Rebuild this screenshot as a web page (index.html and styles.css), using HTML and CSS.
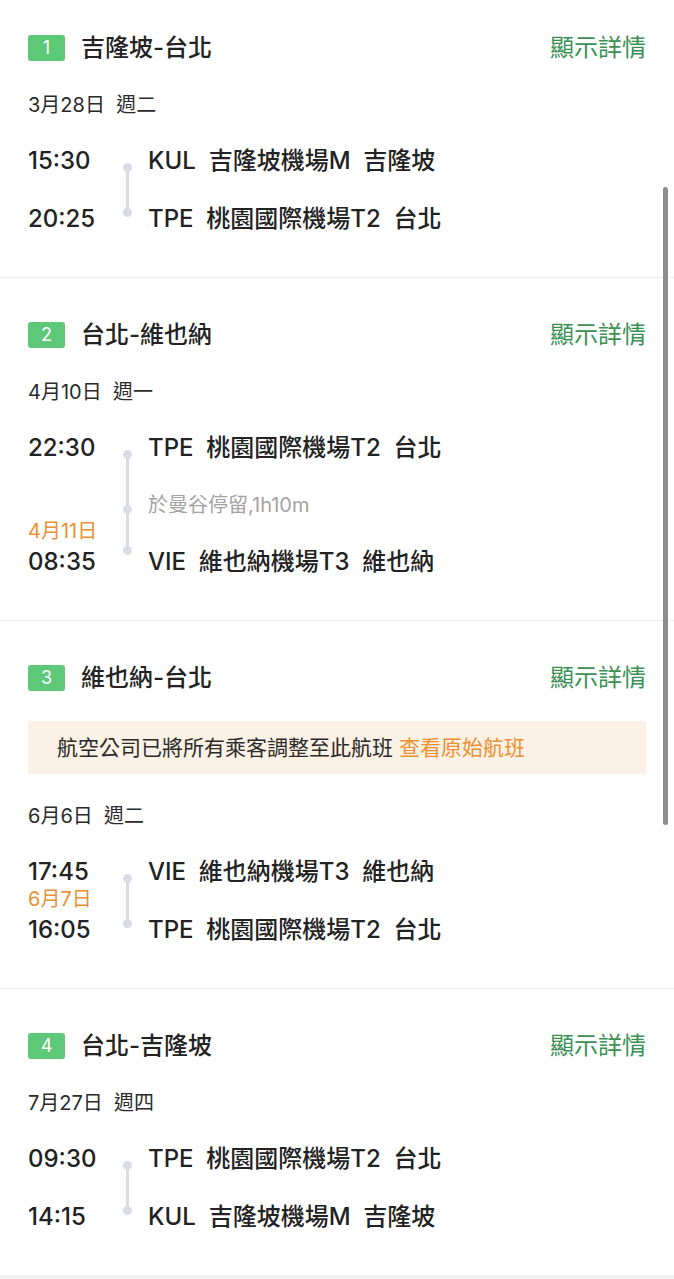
FILE: index.html
```html
<!DOCTYPE html>
<html lang="zh-Hant">
<head>
    <meta charset="UTF-8">
    <meta name="viewport" content="width=device-width, initial-scale=1.0">
    <title>行程航班</title>
    <link rel="stylesheet" href="styles.css">
</head>
<body>
<div class="trip">

    <!-- 第一段 -->
    <section class="leg">
        <div class="leg-head">
            <span class="badge">1</span>
            <h2 class="leg-title">吉隆坡-台北</h2>
            <a class="details">顯示詳情</a>
        </div>
        <div class="leg-date">3月28日&nbsp;&nbsp;週二</div>
        <div class="stops">
            <div class="track"><i class="dot"></i><i class="line"></i><i class="dot"></i></div>
            <div class="time">15:30</div>
            <div class="place">KUL&nbsp;&nbsp;吉隆坡機場M&nbsp;&nbsp;吉隆坡</div>
            <div class="time">20:25</div>
            <div class="place">TPE&nbsp;&nbsp;桃園國際機場T2&nbsp;&nbsp;台北</div>
        </div>
    </section>

    <!-- 第二段 (經停) -->
    <section class="leg">
        <div class="leg-head">
            <span class="badge">2</span>
            <h2 class="leg-title">台北-維也納</h2>
            <a class="details">顯示詳情</a>
        </div>
        <div class="leg-date">4月10日&nbsp;&nbsp;週一</div>
        <div class="stops with-stop">
            <div class="track track-3"><i class="dot"></i><i class="line"></i><i class="dot"></i><i class="line short"></i><i class="dot"></i></div>
            <div class="time">22:30</div>
            <div class="place">TPE&nbsp;&nbsp;桃園國際機場T2&nbsp;&nbsp;台北</div>
            <div class="stopover">於曼谷停留,1h10m</div>
            <div class="time"><span class="next-day">4月11日</span><span>08:35</span></div>
            <div class="place">VIE&nbsp;&nbsp;維也納機場T3&nbsp;&nbsp;維也納</div>
        </div>
    </section>

    <!-- 第三段 -->
    <section class="leg">
        <div class="leg-head">
            <span class="badge">3</span>
            <h2 class="leg-title">維也納-台北</h2>
            <a class="details">顯示詳情</a>
        </div>
        <div class="notice">航空公司已將所有乘客調整至此航班 <a class="notice-link">查看原始航班</a></div>
        <div class="leg-date">6月6日&nbsp;&nbsp;週二</div>
        <div class="stops">
            <div class="track"><i class="dot"></i><i class="line"></i><i class="dot"></i></div>
            <div class="time">17:45</div>
            <div class="place">VIE&nbsp;&nbsp;維也納機場T3&nbsp;&nbsp;維也納</div>
            <div class="time"><span class="next-day">6月7日</span><span>16:05</span></div>
            <div class="place">TPE&nbsp;&nbsp;桃園國際機場T2&nbsp;&nbsp;台北</div>
        </div>
    </section>

    <!-- 第四段 -->
    <section class="leg">
        <div class="leg-head">
            <span class="badge">4</span>
            <h2 class="leg-title">台北-吉隆坡</h2>
            <a class="details">顯示詳情</a>
        </div>
        <div class="leg-date">7月27日&nbsp;&nbsp;週四</div>
        <div class="stops">
            <div class="track"><i class="dot"></i><i class="line"></i><i class="dot"></i></div>
            <div class="time">09:30</div>
            <div class="place">TPE&nbsp;&nbsp;桃園國際機場T2&nbsp;&nbsp;台北</div>
            <div class="time">14:15</div>
            <div class="place">KUL&nbsp;&nbsp;吉隆坡機場M&nbsp;&nbsp;吉隆坡</div>
        </div>
    </section>

    <div class="trip-footer"></div>
</div>

<div class="scrollbar"></div>
</body>
</html>
```

FILE: styles.css
```css
body {
    margin: 0;
    background-color: #ffffff;
    font-family: Inter, "Noto Sans CJK TC", sans-serif;
    color: #222222;
}

.trip {
    min-height: 1279px;
    display: flex;
    flex-direction: column;
}

.leg {
    padding: 39px 28px 29px;
    border-bottom: 1px solid #eeeeee;
}

.leg:first-child {
    padding-top: 30px;
}

.leg:nth-child(4) {
    border-bottom: none;
}

.trip-footer {
    flex: 1;
    background-color: #f2f2f2;
}

/* Cabecera de cada tramo */
.leg-head {
    display: flex;
    align-items: center;
    height: 36px;
}

.badge {
    width: 37px;
    height: 26px;
    border-radius: 3px;
    background-color: #5cc878;
    color: #ffffff;
    font-size: 18px;
    line-height: 26px;
    text-align: center;
    margin-right: 16px;
}

.leg-title {
    margin: 0;
    font-size: 24px;
    font-weight: 500;
    line-height: 36px;
}

.details {
    margin-left: auto;
    color: #3a9055;
    font-size: 24px;
    line-height: 36px;
}

.leg-date {
    margin-top: 26px;
    font-size: 20px;
    line-height: 26px;
    color: #2a2a2a;
}

.notice {
    margin-top: 25px;
    height: 53px;
    padding: 0 29px;
    background-color: #fbf1e4;
    font-size: 21px;
    line-height: 53px;
    color: #2a2a2a;
    white-space: nowrap;
}

.notice-link {
    color: #eb9133;
}

.notice + .leg-date {
    margin-top: 29px;
}

/* Horarios y aeropuertos */
.stops {
    margin-top: 14px;
    display: grid;
    grid-template-columns: 94px 10px 1fr;
    grid-auto-rows: 58px;
    align-items: center;
}

.stops.with-stop {
    grid-template-rows: 58px 56px 58px;
}

.time {
    grid-column: 1;
    display: flex;
    flex-direction: column;
    font-size: 24px;
    font-weight: 500;
    line-height: 30px;
}

.place {
    grid-column: 3;
    padding-left: 16px;
    font-size: 24px;
    font-weight: 500;
    line-height: 30px;
    white-space: nowrap;
}

.stopover {
    grid-column: 3;
    padding-left: 16px;
    font-size: 20px;
    line-height: 26px;
    color: #a3a3a3;
}

.next-day {
    margin: -28px 0 4px;
    font-size: 20px;
    font-weight: 400;
    line-height: 24px;
    color: #eb9133;
}

.track {
    grid-column: 2;
    grid-row: 1 / span 2;
    align-self: stretch;
    display: flex;
    flex-direction: column;
    align-items: center;
    padding: 31px 0 31px;
}

.track-3 {
    grid-row: 1 / span 3;
    padding-bottom: 36px;
}

.dot {
    width: 9px;
    height: 9px;
    border-radius: 50%;
    background-color: #d9dce6;
    flex-shrink: 0;
}

.line {
    flex: 55;
    width: 3px;
    margin: -2px 0;
    background-color: #d9dce6;
}

.line.short {
    flex: 40;
}

/* Barra de desplazamiento superpuesta */
.scrollbar {
    position: absolute;
    top: 187px;
    left: 663px;
    width: 5px;
    height: 638px;
    border-radius: 3px;
    background-color: #8c8c8c;
}
```
